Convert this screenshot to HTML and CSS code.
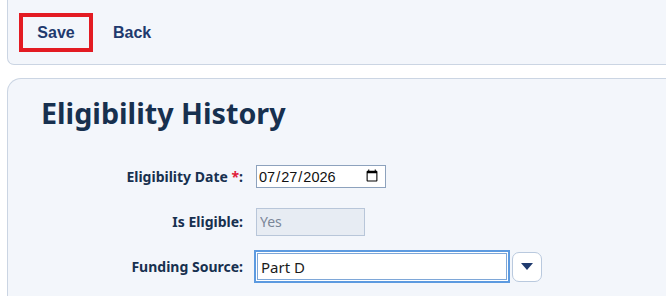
FILE: index.html
```html
<!DOCTYPE html>
<html lang="en">
<head>
    <meta charset="UTF-8">
    <meta name="viewport" content="width=device-width, initial-scale=1.0">
    <title>Eligibility History</title>
    <link rel="stylesheet" href="styles.css">
</head>
<body>
    <div class="toolbar">
        <button class="tool-btn highlight" type="button">Save</button>
        <button class="tool-btn" type="button">Back</button>
    </div>

    <section class="panel">
        <h1>Eligibility History</h1>
        <form class="form-grid">
            <label for="elig-date">Eligibility Date <span class="req">*</span>:</label>
            <div class="row">
                <input type="date" id="elig-date" class="date-input" value="2026-07-27">
            </div>

            <label for="is-eligible">Is Eligible:</label>
            <div class="row">
                <input type="text" id="is-eligible" class="ro-input" value="Yes" readonly>
            </div>

            <label for="funding">Funding Source:</label>
            <div class="row">
                <input type="text" id="funding" class="combo-input" value="Part D" autofocus>
                <button class="combo-btn" type="button" aria-label="Open list">
                    <svg width="12" height="7" viewBox="0 0 12 7"><path d="M0 0h12L6 7z" fill="#1f3a6e"/></svg>
                </button>
            </div>
        </form>
    </section>
</body>
</html>
```

FILE: styles.css
```css
body {
    margin: 0;
    background: #fff;
    font-family: "Noto Sans", "Open Sans", sans-serif;
    color: #1b2e4b;
}

.toolbar {
    margin-left: 7px;
    height: 65px;
    box-sizing: border-box;
    padding: 13px 0 0 11px;
    display: flex;
    align-items: flex-start;
    gap: 8px;
    background: #f3f6fb;
    border: 1px solid #cbd5e3;
    border-top: none;
    border-right: none;
    border-bottom-left-radius: 7px;
}

.tool-btn {
    height: 39px;
    padding: 0 8px;
    background: none;
    border: 4px solid transparent;
    font-family: "Liberation Sans", Arial, sans-serif;
    font-weight: bold;
    font-size: 16px;
    color: #1f3a6e;
    cursor: pointer;
}

.tool-btn.highlight {
    width: 74px;
    border-color: #e31b23;
}

.panel {
    margin: 13px 0 0 7px;
    min-height: 230px;
    background: #f3f6fb;
    border: 1px solid #cbd5e3;
    border-right: none;
    border-bottom: none;
    border-top-left-radius: 14px;
}

.panel h1 {
    margin: 14px 0 0 33px;
    font-size: 28.7px;
    font-weight: bold;
    line-height: 40px;
    color: #17304f;
}

.form-grid {
    margin-top: 21px;
    display: grid;
    grid-template-columns: 235px auto;
    grid-auto-rows: 45px;
    column-gap: 12px;
    align-items: center;
}

.form-grid label {
    text-align: right;
    font-size: 14px;
    font-weight: bold;
    color: #17304f;
}

.req {
    color: #e0203a;
}

.row {
    display: flex;
    align-items: center;
    gap: 5px;
}

.date-input {
    width: 130px;
    height: 23px;
    box-sizing: border-box;
    margin-left: 1px;
    padding: 0 4px 0 1px;
    border: 1px solid #8da2bd;
    border-radius: 0;
    background: #fff;
    font-family: "Liberation Sans", Arial, sans-serif;
    font-size: 14.5px;
    color: #111;
}

.ro-input {
    width: 109px;
    height: 28px;
    box-sizing: border-box;
    margin-left: 1px;
    padding: 0 3px;
    border: 1px solid #b8c6d9;
    background: #e7ecf3;
    font-family: "Noto Sans", sans-serif;
    font-size: 14px;
    color: #7a8698;
}

.combo-input {
    width: 250px;
    height: 27px;
    box-sizing: border-box;
    margin-left: 2px;
    padding: 0 3px;
    border: 1px solid #7ea7d8;
    outline: none;
    box-shadow: 0 0 0 1px #fff, 0 0 0 3px #5c9ae0;
    background: #fff;
    font-family: "Noto Sans", sans-serif;
    font-size: 15px;
    color: #1b1b1b;
}

.combo-input:focus {
    outline: none;
}

.combo-btn {
    width: 30px;
    height: 30px;
    display: flex;
    align-items: center;
    justify-content: center;
    padding: 0;
    background: #fff;
    border: 1px solid #b9c9de;
    border-radius: 7px;
    cursor: pointer;
}
```
